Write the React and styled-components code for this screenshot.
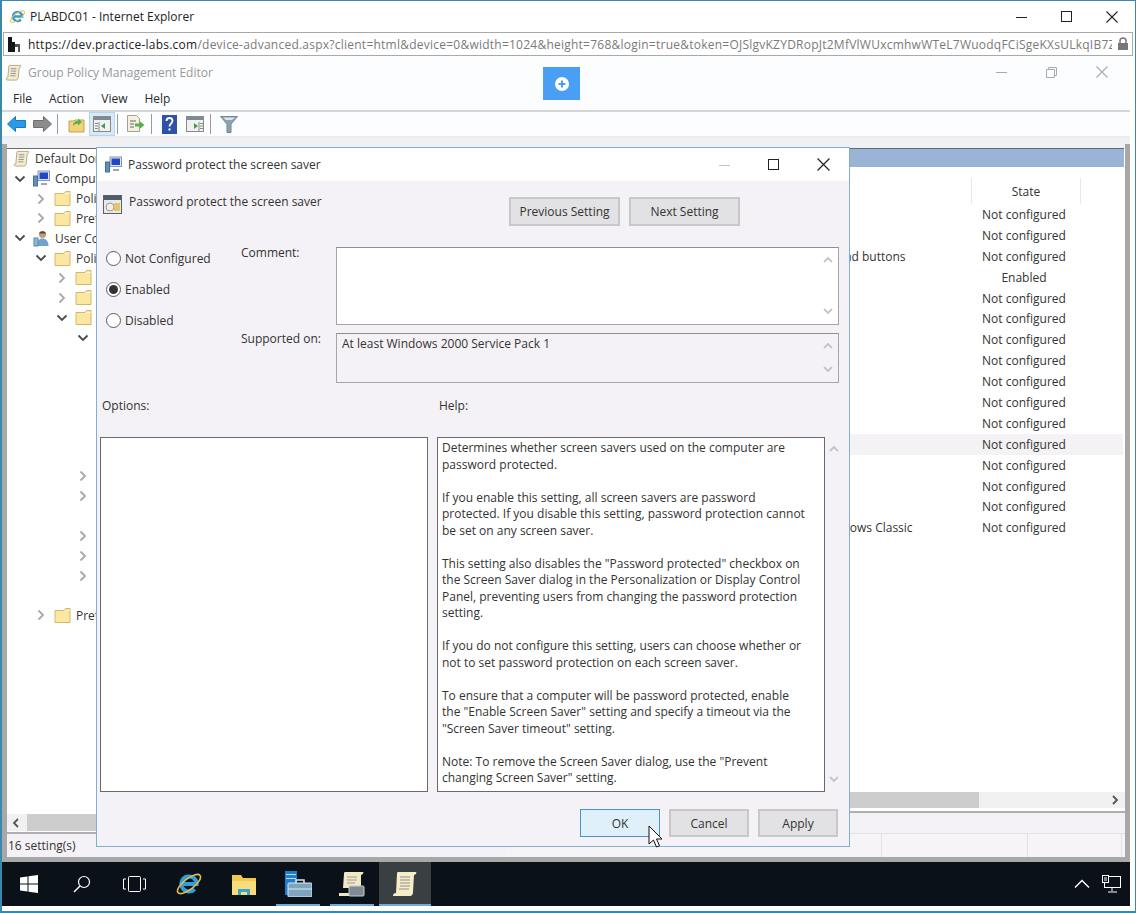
import styled, { createGlobalStyle } from 'styled-components'

const GlobalStyle = createGlobalStyle`
  html, body {
    margin: 0;
    padding: 0;
    background: #ffffff;
  }
  * {
    box-sizing: border-box;
  }
`

const Screen = styled.div`
  position: relative;
  display: flex;
  flex-direction: column;
  width: 1136px;
  height: 913px;
  overflow: hidden;
  background: #ffffff;
  border-style: solid;
  border-color: #3b87ad;
  border-width: 1px 1px 2px 2px;
  font-family: "Open Sans", "Noto Sans", sans-serif;
  font-size: 12px;
  color: #333333;
`

const BrowserTitle = styled.div`
  display: flex;
  align-items: center;
  flex: none;
  height: 31px;
  padding-left: 7px;
  gap: 4px;
  color: #222222;
`

const WindowControls = styled.div`
  display: flex;
  margin-left: auto;
  padding-right: ${p => p.$right}px;
  gap: ${p => p.$gap}px;
  align-items: center;
`

const AddressBar = styled.div`
  display: flex;
  align-items: center;
  flex: none;
  height: 24px;
  margin: 0 2px 0 1px;
  padding: 0 3px;
  border: 1px solid #a9a9a9;
  background: #ffffff;
`

const AddressText = styled.div`
  flex: 1;
  margin-left: 6px;
  overflow: hidden;
  white-space: nowrap;
  color: #7a7a7a;
  letter-spacing: 0.02em;
  b {
    font-weight: 400;
    color: #222222;
  }
`

const Editor = styled.div`
  display: flex;
  flex-direction: column;
  flex: 1;
  min-height: 0;
  margin-right: 5px;
  background: #f1f1f3;
`

const EditorTitle = styled.div`
  display: flex;
  align-items: center;
  flex: none;
  height: 32px;
  padding-left: 3px;
  gap: 6px;
  color: #9a9a9a;
  background: #fcfdff;
`

const MenuBar = styled.div`
  display: flex;
  align-items: center;
  flex: none;
  height: 24px;
  padding: 0 0 2px 11px;
  gap: 17px;
  color: #2a2a2a;
  background: #fcfdff;
  border-bottom: 2px solid #d6d6d6;
`

const Toolbar = styled.div`
  display: flex;
  align-items: center;
  flex: none;
  height: 26px;
  padding-left: 1px;
  background: #fcfdff;
  border-bottom: 2px solid #ececee;
`

const ToolButton = styled.div`
  display: flex;
  align-items: center;
  justify-content: center;
  width: 26px;
  height: 24px;
  background: ${p => (p.$active ? '#d8e8f5' : 'transparent')};
  border: 1px solid ${p => (p.$active ? '#b4d5ec' : 'transparent')};
`

const ToolSeparator = styled.div`
  width: 1px;
  height: 20px;
  margin-left: ${p => p.$left}px;
  margin-right: ${p => p.$right}px;
  background: #9a9a9a;
`

const Workspace = styled.div`
  display: flex;
  flex: 1;
  min-height: 0;
  margin-top: 6px;
  padding-top: 4px;
  background: #f1f1f3;
  border-style: solid;
  border-color: #a8a8a8;
  border-width: 0 5px 5px 5px;
`

const TreeColumn = styled.div`
  display: flex;
  flex-direction: column;
  flex: none;
  width: 500px;
  border-top: 1px solid #6e6e6e;
  background: #ffffff;
`

const TreePane = styled.div`
  flex: 1;
  min-height: 0;
  overflow: hidden;
`

const TreeRow = styled.div`
  display: flex;
  align-items: center;
  height: 19.85px;
  padding-left: ${p => (p.$level === 0 ? 6 : 6 + 21 * (p.$level - 1))}px;
  white-space: nowrap;
`

const ChevronSlot = styled.div`
  display: flex;
  align-items: center;
  justify-content: center;
  flex: none;
  width: 14px;
  margin-right: 6px;
`

const TreeLabel = styled.span`
  margin-left: 5px;
`

const HScroll = styled.div`
  display: flex;
  align-items: center;
  flex: none;
  height: ${p => p.$height}px;
  background: #f1f1f1;
`

const ScrollThumb = styled.div`
  height: 100%;
  margin-left: ${p => p.$left}px;
  width: ${p => p.$width}px;
  background: #cdcdcd;
`

const ScrollArrow = styled.div`
  display: flex;
  justify-content: center;
  flex: none;
  width: 20px;
  margin-left: ${p => (p.$end ? 'auto' : '0')};
`

const TreeStatus = styled.div`
  display: flex;
  align-items: center;
  flex: none;
  height: 25px;
  margin-top: 1px;
  padding-left: 1px;
  background: #f4f2f6;
  border-top: 2px solid #b0b0b0;
`

const DetailColumn = styled.div`
  display: flex;
  flex-direction: column;
  flex: 1;
  min-width: 0;
  background: #ffffff;
`

const BlueBar = styled.div`
  flex: none;
  height: 19px;
  margin-right: 1px;
  background: #99b4d4;
  border-top: 1px solid #5d6a78;
`

const DetailHeader = styled.div`
  display: grid;
  grid-template-columns: 1fr 110px 44px;
  flex: none;
  height: 26px;
  margin-top: 11px;
`

const StateHeading = styled.div`
  display: flex;
  align-items: center;
  justify-content: center;
  grid-column: 2;
  border-left: 1px solid #e8e8e8;
  border-right: 1px solid #e8e8e8;
`

const DetailRows = styled.div`
  flex: 1;
  min-height: 0;
`

const DetailRow = styled.div`
  display: grid;
  grid-template-columns: 1fr 110px 44px;
  align-items: center;
  height: 20.9px;
  margin-right: 2px;
  background: ${p => (p.$selected ? '#f4f2f5' : 'transparent')};
`

const SettingName = styled.div`
  padding-left: 95px;
  white-space: nowrap;
  overflow: hidden;
`

const SettingState = styled.div`
  text-align: center;
  white-space: nowrap;
`

const DetailTabs = styled.div`
  flex: none;
  height: 22px;
  margin-top: 3px;
  background: #f4f2f6;
  border-top: 2px solid #b0b0b0;
`

const DetailStatus = styled.div`
  display: grid;
  grid-template-columns: 375px 146px 94px;
  flex: none;
  height: 24px;
  background: #f6f4f7;
  border-top: 1px solid #e2e2e2;
`

const StatusCell = styled.div`
  border-right: 1px solid #e2e2e2;
`

const Taskbar = styled.div`
  display: flex;
  align-items: stretch;
  flex: none;
  height: 44px;
  background: #0a1119;
`

const TaskItem = styled.div`
  position: relative;
  display: flex;
  align-items: center;
  justify-content: center;
  flex: none;
  width: ${p => p.$width}px;
  background: ${p => (p.$active ? '#3a3f42' : 'transparent')};
  &::after {
    content: '';
    display: ${p => (p.$running || p.$active ? 'block' : 'none')};
    position: absolute;
    bottom: 0;
    left: ${p => (p.$active ? 0 : 5)}px;
    right: ${p => (p.$active ? 0 : 5)}px;
    height: 2px;
    background: #6fa9d6;
  }
`

const Tray = styled.div`
  display: flex;
  align-items: center;
  margin-left: auto;
  padding-right: 9px;
  gap: 12px;
`

const BottomStrip = styled.div`
  flex: none;
  height: 5px;
  background: #ffffff;
`

const FloatingButton = styled.div`
  position: absolute;
  left: 541px;
  top: 66px;
  display: flex;
  align-items: center;
  justify-content: center;
  width: 37px;
  height: 33px;
  background: #4a9ff5;
`

const Dialog = styled.div`
  position: absolute;
  left: 94px;
  top: 146px;
  display: flex;
  flex-direction: column;
  width: 754px;
  height: 700px;
  background: #f4f2f6;
  border: 1px solid #7fb0d0;
`

const DialogTitle = styled.div`
  display: flex;
  align-items: center;
  flex: none;
  height: 33px;
  padding-left: 8px;
  gap: 6px;
  background: #ffffff;
`

const DialogBody = styled.div`
  display: flex;
  flex-direction: column;
  flex: 1;
  padding-left: 3px;
`

const HeadRow = styled.div`
  display: grid;
  grid-template-columns: 406px auto;
  height: 49px;
  margin-left: 3px;
  padding-top: 14px;
`

const PolicyName = styled.div`
  display: flex;
  align-items: flex-start;
  gap: 7px;
  line-height: 14px;
`

const NavButtons = styled.div`
  display: flex;
  gap: 9px;
  margin-top: 2px;
`

const PushButton = styled.div`
  display: flex;
  align-items: center;
  justify-content: center;
  width: ${p => p.$width}px;
  height: ${p => p.$height}px;
  color: #333333;
  background: ${p => (p.$primary ? '#e0f0fb' : '#e2e1e3')};
  border: ${p => (p.$primary ? '1px solid #4a94c8' : '2px solid #c8c8c8')};
`

const SettingsGrid = styled.div`
  display: grid;
  grid-template-columns: 138px 95px 503px;
  grid-template-rows: 78px 50px;
  row-gap: 8px;
  margin-left: 3px;
`

const RadioGroup = styled.div`
  display: flex;
  flex-direction: column;
  grid-row: 1 / 3;
  gap: 11px;
  padding: 1px 0 0 3px;
`

const RadioRow = styled.div`
  display: flex;
  align-items: center;
  height: 20px;
  gap: 4px;
`

const RadioCircle = styled.div`
  display: flex;
  align-items: center;
  justify-content: center;
  width: 15px;
  height: 15px;
  background: #ffffff;
  border: 1px solid #5c5c5c;
  border-radius: 50%;
  &::after {
    content: '';
    display: ${p => (p.$checked ? 'block' : 'none')};
    width: 9px;
    height: 9px;
    border-radius: 50%;
    background: #333333;
  }
`

const FieldLabel = styled.div`
  line-height: 12px;
`

const FieldBox = styled.div`
  display: flex;
  background: ${p => (p.$readOnly ? '#f4f2f6' : '#ffffff')};
  border: 1px solid #a6a6a6;
  border-top-color: #8f8f8f;
`

const FieldText = styled.div`
  flex: 1;
  padding: 2px 5px;
  line-height: 16px;
`

const VScroll = styled.div`
  display: flex;
  flex-direction: column;
  justify-content: space-between;
  align-items: center;
  flex: none;
  width: ${p => p.$width}px;
  padding: 7px 0;
`

const LowerGrid = styled.div`
  display: grid;
  grid-template-columns: 328px 9px 388px 18px;
  grid-template-rows: 14px 355px;
  row-gap: 24px;
  margin-top: 16px;
`

const PaneLabel = styled.div`
  grid-column: ${p => p.$column};
  padding-left: 2px;
  line-height: 14px;
`

const OptionsBox = styled.div`
  grid-column: 1;
  background: #ffffff;
  border: 1px solid #6a6a6a;
`

const HelpBox = styled.div`
  grid-column: 3;
  padding: 2px 0 0 4px;
  line-height: 16.5px;
  white-space: pre;
  overflow: hidden;
  background: #ffffff;
  border: 1px solid #6a6a6a;
`

const DialogFooter = styled.div`
  display: flex;
  justify-content: flex-end;
  gap: 9px;
  margin-top: 17px;
  padding-right: 11px;
`

const Cursor = styled.svg`
  position: absolute;
  left: 646px;
  top: 824px;
`

const Chevron = ({ open }) => (
  <svg width="12" height="12" viewBox="0 0 12 12">
    <path
      d={open ? 'M1.5 3.5L6 8l4.5-4.5' : 'M3.5 1.5L8 6l-4.5 4.5'}
      fill="none"
      stroke={open ? '#4a4a4a' : '#a9a9a9'}
      strokeWidth="1.8"
    />
  </svg>
)

const Arrow = ({ dir, color = '#c4c4c4' }) => {
  const paths = {
    up: 'M2 7l4-4 4 4',
    down: 'M2 4l4 4 4-4',
    left: 'M7 2L3 6l4 4',
    right: 'M4 2l4 4-4 4',
  }
  return (
    <svg width="12" height="12" viewBox="0 0 12 12" style={{ display: 'block' }}>
      <path d={paths[dir]} fill="none" stroke={color} strokeWidth="1.8" />
    </svg>
  )
}

const Minimize = ({ color = '#222', width = 11 }) => (
  <svg width={width} height="12" viewBox={`0 0 ${width} 12`}>
    <path d={`M0 6.5H${width}`} stroke={color} />
  </svg>
)

const Maximize = ({ color = '#222' }) => (
  <svg width="11" height="11" viewBox="0 0 11 11">
    <rect x="0.5" y="0.5" width="10" height="10" fill="none" stroke={color} />
  </svg>
)

const Restore = ({ color = '#aaa' }) => (
  <svg width="11" height="11" viewBox="0 0 11 11">
    <path d="M0.5 2.5h8v8h-8zM2.5 2.5v-2h8v8h-2" fill="none" stroke={color} />
  </svg>
)

const Close = ({ color = '#222', size = 12 }) => (
  <svg width={size} height={size} viewBox="0 0 12 12">
    <path d="M0.5 0.5l11 11M11.5 0.5l-11 11" fill="none" stroke={color} strokeWidth="1.1" />
  </svg>
)

const IEIcon = ({ size = 17 }) => (
  <svg width={size} height={size} viewBox="0 0 24 24">
    <path d="M5.5 12H18.5A6.5 6.5 0 1 0 16.8 16.4" fill="none" stroke="#2f9fdc" strokeWidth="3.4" />
    <ellipse cx="12" cy="12" rx="12" ry="4.6" transform="rotate(-38 12 12)" fill="none" stroke="#e6bb45" strokeWidth="1.4" />
  </svg>
)

const SiteIcon = () => (
  <svg width="15" height="18" viewBox="0 0 15 18">
    <path d="M1 2h4v15H1zM5 7h3v10H5z" fill="#161616" />
    <path d="M8 9h5v8h-2v-5H8z" fill="#555" />
  </svg>
)

const ScrollIcon = ({ size = 17, paper = '#f4ecd2' }) => (
  <svg width={size} height={size} viewBox="0 0 18 18">
    <path d="M5 1.5h11c1 0 1 2-1 2.5l-1 10c0 2-1 3-2.500 3H2.500c-1.500 0-2-2.500 0.500-2.500L4 3c0-1 0-1.500 1-1.500z" fill={paper} stroke="#b5a67c" />
    <path d="M6 5h6M6 7.500h6M6 10h5.500M5.500 12.500h5.500" stroke="#8d8d8d" />
  </svg>
)

const FolderIcon = ({ size = 17 }) => (
  <svg width={size} height={size} viewBox="0 0 17 17">
    <path d="M1 3.500h9l1.500-2H16v14H1z" fill="#fbe6a2" stroke="#d4b86a" />
    <path d="M10.500 3.500H16" stroke="#f6f0dc" />
  </svg>
)

const ComputerIcon = () => (
  <svg width="17" height="17" viewBox="0 0 17 17">
    <rect x="5" y="1" width="11.500" height="9.500" fill="#dfe6ee" stroke="#8a97a6" />
    <rect x="6.500" y="2.500" width="8.500" height="6.500" fill="#1f48c8" />
    <path d="M8 13h6v2H8z" fill="#9aa6b3" />
    <rect x="0.500" y="6" width="4" height="10" fill="#5f8fc0" stroke="#486c92" />
  </svg>
)

const UserIcon = () => (
  <svg width="17" height="17" viewBox="0 0 17 17">
    <circle cx="9.500" cy="4.500" r="3.500" fill="#c49a72" />
    <path d="M6 3.500c1-3 6-3 7 0z" fill="#5a4636" />
    <path d="M4 16c0-5 2-7.500 5.500-7.500S15.500 11 15.500 16z" fill="#6ea3cf" />
    <rect x="1" y="8" width="4" height="8" fill="#8fb8d8" stroke="#5b88ad" />
  </svg>
)

const BackIcon = () => (
  <svg width="19" height="16" viewBox="0 0 19 16">
    <path d="M0.500 8L8.500 0.500v4h10v7h-10v4z" fill="#2a9ae6" stroke="#1c79bd" />
  </svg>
)

const ForwardIcon = () => (
  <svg width="19" height="16" viewBox="0 0 19 16">
    <path d="M18.500 8L10.500 0.500v4h-10v7h10v4z" fill="#8c8c8c" stroke="#6e6e6e" />
  </svg>
)

const FolderUpIcon = () => (
  <svg width="17" height="17" viewBox="0 0 17 17">
    <path d="M1 5h5l1-1h9v12H1z" fill="#f3d27e" stroke="#c6a24f" />
    <path d="M5 10c0-3 2-5 5-5V2.500L14 6l-4 3.500V7.500c-2 0-4 1-5 2.500z" fill="#58b04a" />
  </svg>
)

const PaneIcon = ({ arrow = 'left' }) => (
  <svg width="18" height="16" viewBox="0 0 18 16">
    <rect x="0.500" y="0.500" width="17" height="15" fill="#f1f1f1" stroke="#8a8a8a" />
    <rect x="1" y="1" width="16" height="3" fill="#7d8b96" />
    <path d={arrow === 'left' ? 'M8 10l4-3v6z' : 'M12 10L8 7v6z'} fill="#3f9e46" />
    <path d={arrow === 'left' ? 'M6 6v9M2 7.500h3M2 10h3M2 12.500h3' : 'M13 6v9M14 7.500h3M14 10h3M14 12.500h3'} stroke="#8a8a8a" />
  </svg>
)

const ExportIcon = () => (
  <svg width="20" height="18" viewBox="0 0 20 18">
    <path d="M2.500 0.500h9l3 3v13h-12z" fill="#f6f0e4" stroke="#a89f8d" />
    <path d="M5 6h6M5 9h4M5 12h4" stroke="#666" />
    <path d="M10 8.500h4.500V6l5 4-5 4v-2.500H10z" fill="#58b04a" />
  </svg>
)

const HelpIcon = () => (
  <svg width="15" height="19" viewBox="0 0 15 19">
    <rect width="15" height="19" fill="#2f52a8" />
    <path d="M4.500 6c0-4 6-4 6 0 0 2.500-3 2.500-3 5.500" fill="none" stroke="#ffffff" strokeWidth="1.800" />
    <rect x="6.500" y="13.500" width="2" height="2" fill="#ffffff" />
  </svg>
)

const FilterIcon = () => (
  <svg width="18" height="17" viewBox="0 0 18 17">
    <path d="M0.500 0.500h17L11 8v8.500H7V8z" fill="#8ca3b0" stroke="#71858f" />
    <path d="M3 1.500h12L12 4H6z" fill="#dce5ea" />
  </svg>
)

const PlusDot = () => (
  <svg width="16" height="16" viewBox="0 0 16 16">
    <circle cx="8" cy="8" r="7" fill="#ffffff" />
    <path d="M8 4.500v7M4.500 8h7" stroke="#4a9ff5" strokeWidth="2" />
  </svg>
)

const PolicyIcon = () => (
  <svg width="19" height="19" viewBox="0 0 19 19">
    <rect x="0.500" y="0.500" width="18" height="18" fill="#e9e9e9" stroke="#56626c" />
    <rect x="1" y="1" width="17" height="4" fill="#4d5e6b" />
    <circle cx="7" cy="12" r="4" fill="#f4efe0" stroke="#9c9c9c" />
    <rect x="11" y="8" width="6" height="8" fill="#e6c46a" />
  </svg>
)

const WindowsLogo = () => (
  <svg width="18" height="18" viewBox="0 0 18 18">
    <path d="M0 2.500L7.500 1.400v7H0zM8.500 1.300L18 0v8.400H8.500zM0 9.500h7.500v7L0 15.500zM8.500 9.500H18V18l-9.500-1.300z" fill="#ffffff" />
  </svg>
)

const SearchIcon = () => (
  <svg width="18" height="18" viewBox="0 0 18 18">
    <circle cx="11" cy="7" r="5.500" fill="none" stroke="#ffffff" strokeWidth="1.200" />
    <path d="M7 11l-6 6" stroke="#ffffff" strokeWidth="1.400" />
  </svg>
)

const TaskViewIcon = () => (
  <svg width="23" height="16" viewBox="0 0 23 16">
    <rect x="5.500" y="0.500" width="12" height="15" rx="1" fill="none" stroke="#ffffff" />
    <path d="M3 3H0.500v10H3M20 3h2.500v10H20" fill="none" stroke="#ffffff" />
  </svg>
)

const ExplorerIcon = () => (
  <svg width="24" height="21" viewBox="0 0 24 21">
    <path d="M0 1h9l2 3h13v17H0z" fill="#f2c84e" />
    <path d="M0 7h24v14H0z" fill="#f9dc7c" />
    <path d="M6 15h12v6H6z" fill="#3aa3d0" />
    <path d="M9 18h6v3H9z" fill="#f9dc7c" />
  </svg>
)

const ServerManagerIcon = () => (
  <svg width="27" height="26" viewBox="0 0 27 26">
    <rect x="0" y="0" width="12" height="24" fill="#1d7ed0" />
    <path d="M1 3h10v1H1zM1 7h10v1H1z" fill="#b8dcf6" />
    <rect x="3" y="12" width="24" height="14" rx="1" fill="#7fa4bd" stroke="#dde7ee" />
    <path d="M11 12V9h8v3" fill="none" stroke="#dde7ee" strokeWidth="1.500" />
    <path d="M3 18h24" stroke="#dde7ee" />
  </svg>
)

const GroupPolicyIcon = () => (
  <svg width="26" height="26" viewBox="0 0 26 26">
    <path d="M6 1h18c1 0 0 3-2 3v13H4L5 3c0-1 0-2 1-2z" fill="#f3e8c4" />
    <path d="M8 6h10M8 9h10M8 12h8" stroke="#999" />
    <path d="M0 22h14v3H0z" fill="#f3e8c4" />
    <rect x="10" y="15" width="15" height="10" rx="1" fill="#7f8a92" stroke="#c5ccd0" />
  </svg>
)

const ScrollTaskIcon = () => (
  <svg width="24" height="26" viewBox="0 0 24 26">
    <path d="M5 1h18c1 0 0 3-2 3l-1 17c0 2-1 4-3 4H0c0-2 1-3 3-3L4 3c0-1 0-2 1-2z" fill="#f7eec8" />
    <path d="M7 6h10M7 9h10M7 12h10M7 15h10M6 18h10" stroke="#8d8d8d" />
  </svg>
)

const CaretUp = () => (
  <svg width="16" height="10" viewBox="0 0 16 10">
    <path d="M1 8.500l7-7 7 7" fill="none" stroke="#ffffff" strokeWidth="1.400" />
  </svg>
)

const NetworkIcon = () => (
  <svg width="19" height="18" viewBox="0 0 19 18">
    <rect x="2.500" y="1.500" width="16" height="11" fill="none" stroke="#ffffff" />
    <rect x="0.500" y="0.500" width="6" height="7" fill="#0a1119" stroke="#ffffff" />
    <path d="M2 3h3M2 5h3M10 13v3M6 17h9" stroke="#ffffff" />
  </svg>
)

const treeRows = [
  { level: 0, label: 'Default Domain Policy [PLABDC01]', icon: 'scroll' },
  { level: 1, label: 'Computer Configuration', icon: 'computer', open: true },
  { level: 2, label: 'Policies', icon: 'folder' },
  { level: 2, label: 'Preferences', icon: 'folder' },
  { level: 1, label: 'User Configuration', icon: 'user', open: true },
  { level: 2, label: 'Policies', icon: 'folder', open: true },
  { level: 3, label: 'Software Settings', icon: 'folder' },
  { level: 3, label: 'Windows Settings', icon: 'folder' },
  { level: 3, label: 'Administrative Templates', icon: 'folder', open: true },
  { level: 4, label: 'Control Panel', icon: 'folder', open: true },
  { level: 5, label: 'Add or Remove Programs', icon: 'folder', leaf: true },
  { level: 5, label: 'Display', icon: 'folder', leaf: true },
  { level: 5, label: 'Personalization', icon: 'folder', leaf: true },
  { level: 5, label: 'Printers', icon: 'folder', leaf: true },
  { level: 5, label: 'Programs', icon: 'folder', leaf: true },
  { level: 5, label: 'Regional and Language Options', icon: 'folder', leaf: true },
  { level: 4, label: 'Desktop', icon: 'folder' },
  { level: 4, label: 'Network', icon: 'folder' },
  { level: 4, label: 'Shared Folders', icon: 'folder', leaf: true },
  { level: 4, label: 'Start Menu and Taskbar', icon: 'folder' },
  { level: 4, label: 'System', icon: 'folder' },
  { level: 4, label: 'Windows Components', icon: 'folder' },
  { level: 4, label: 'All Settings', icon: 'folder', leaf: true },
  { level: 2, label: 'Preferences', icon: 'folder' },
]

const treeIcons = {
  scroll: <ScrollIcon />,
  computer: <ComputerIcon />,
  user: <UserIcon />,
  folder: <FolderIcon />,
}

const settings = [
  ['Prevent changing color scheme', 'Not configured'],
  ['Prevent changing theme', 'Not configured'],
  ['Prevent changing visual style for windows and buttons', 'Not configured'],
  ['Enable screen saver', 'Enabled'],
  ['Prohibit selection of visual style font size', 'Not configured'],
  ['Prevent changing color and appearance', 'Not configured'],
  ['Prevent changing desktop background', 'Not configured'],
  ['Prevent changing desktop icons', 'Not configured'],
  ['Prevent changing mouse pointers', 'Not configured'],
  ['Prevent changing screen saver', 'Not configured'],
  ['Prevent changing sounds', 'Not configured'],
  ['Password protect the screen saver', 'Not configured'],
  ['Screen saver timeout', 'Not configured'],
  ['Force specific screen saver', 'Not configured'],
  ['Load a specific theme', 'Not configured'],
  ['Force a specific visual style file or force Windows Classic', 'Not configured'],
]

const helpText = `Determines whether screen savers used on the computer are
password protected.

If you enable this setting, all screen savers are password
protected. If you disable this setting, password protection cannot
be set on any screen saver.

This setting also disables the "Password protected" checkbox on
the Screen Saver dialog in the Personalization or Display Control
Panel, preventing users from changing the password protection
setting.

If you do not configure this setting, users can choose whether or
not to set password protection on each screen saver.

To ensure that a computer will be password protected, enable
the "Enable Screen Saver" setting and specify a timeout via the
"Screen Saver timeout" setting.

Note: To remove the Screen Saver dialog, use the "Prevent
changing Screen Saver" setting.`

const taskItems = [
  { width: 53, icon: <WindowsLogo /> },
  { width: 53, icon: <SearchIcon /> },
  { width: 53, icon: <TaskViewIcon /> },
  { width: 56, icon: <IEIcon size={28} /> },
  { width: 54, icon: <ExplorerIcon /> },
  { width: 54, icon: <ServerManagerIcon />, running: true },
  { width: 54, icon: <GroupPolicyIcon />, running: true },
  { width: 52, icon: <ScrollTaskIcon />, active: true },
]

const App = () => {
  return (
    <Screen>
      <GlobalStyle />
      <BrowserTitle>
        <IEIcon />
        <span>PLABDC01 - Internet Explorer</span>
        <WindowControls $right={17} $gap={34}>
          <Minimize />
          <Maximize />
          <Close />
        </WindowControls>
      </BrowserTitle>
      <AddressBar>
        <SiteIcon />
        <AddressText>
          <b>https://dev.practice-labs.com</b>/device-advanced.aspx?client=html&device=0&width=1024&height=768&login=true&token=OJSlgvKZYDRopJt2MfVlWUxcmhwWTeL7WuodqFCiSgeKXsULkqIB7ZFUxR7ZYOgV
        </AddressText>
        <svg width="12" height="14" viewBox="0 0 12 14" style={{ marginLeft: 5 }}>
          <path d="M3 6V4a3 3 0 0 1 6 0v2" fill="none" stroke="#777" strokeWidth="1.500" />
          <rect x="1" y="6" width="10" height="7" fill="#777" />
        </svg>
      </AddressBar>
      <Editor>
        <EditorTitle>
          <ScrollIcon />
          <span>Group Policy Management Editor</span>
          <WindowControls $right={22} $gap={39}>
            <Minimize color="#aaa" />
            <Restore />
            <Close color="#aaa" />
          </WindowControls>
        </EditorTitle>
        <MenuBar>
          <span>File</span>
          <span>Action</span>
          <span>View</span>
          <span>Help</span>
        </MenuBar>
        <Toolbar>
          <ToolButton><BackIcon /></ToolButton>
          <ToolButton><ForwardIcon /></ToolButton>
          <ToolSeparator $left={2} $right={5} />
          <ToolButton><FolderUpIcon /></ToolButton>
          <ToolButton $active><PaneIcon /></ToolButton>
          <ToolSeparator $left={2} $right={4} />
          <ToolButton><ExportIcon /></ToolButton>
          <ToolSeparator $left={3} $right={4} />
          <ToolButton><HelpIcon /></ToolButton>
          <ToolButton><PaneIcon arrow="right" /></ToolButton>
          <ToolSeparator $left={2} $right={5} />
          <ToolButton><FilterIcon /></ToolButton>
        </Toolbar>
        <Workspace>
          <TreeColumn>
            <TreePane>
              {treeRows.map((row, i) => (
                <TreeRow key={i} $level={row.level}>
                  {row.level > 0 && (
                    <ChevronSlot>{!row.leaf && <Chevron open={row.open} />}</ChevronSlot>
                  )}
                  {treeIcons[row.icon]}
                  <TreeLabel>{row.label}</TreeLabel>
                </TreeRow>
              ))}
            </TreePane>
            <HScroll $height={17}>
              <ScrollArrow><Arrow dir="left" color="#555" /></ScrollArrow>
              <ScrollThumb $left={0} $width={380} />
            </HScroll>
            <TreeStatus>16 setting(s)</TreeStatus>
          </TreeColumn>
          <DetailColumn>
            <BlueBar />
            <DetailHeader>
              <StateHeading>State</StateHeading>
            </DetailHeader>
            <DetailRows>
              {settings.map(([name, state], i) => (
                <DetailRow key={name} $selected={i === 11}>
                  <SettingName>{name}</SettingName>
                  <SettingState>{state}</SettingState>
                </DetailRow>
              ))}
            </DetailRows>
            <HScroll $height={16}>
              <ScrollThumb $left={0} $width={472} />
              <ScrollArrow $end><Arrow dir="right" color="#555" /></ScrollArrow>
            </HScroll>
            <DetailTabs />
            <DetailStatus>
              <StatusCell />
              <StatusCell />
              <StatusCell />
            </DetailStatus>
          </DetailColumn>
        </Workspace>
        <Taskbar>
          {taskItems.map((item, i) => (
            <TaskItem key={i} $width={item.width} $running={item.running} $active={item.active}>
              {item.icon}
            </TaskItem>
          ))}
          <Tray>
            <CaretUp />
            <NetworkIcon />
          </Tray>
        </Taskbar>
      </Editor>
      <BottomStrip />

      <FloatingButton>
        <PlusDot />
      </FloatingButton>

      <Dialog>
        <DialogTitle>
          <ComputerIcon />
          <span>Password protect the screen saver</span>
          <WindowControls $right={19} $gap={38}>
            <Minimize color="#c4c4c4" />
            <Maximize />
            <Close size={13} />
          </WindowControls>
        </DialogTitle>
        <DialogBody>
          <HeadRow>
            <PolicyName>
              <PolicyIcon />
              <span>Password protect the screen saver</span>
            </PolicyName>
            <NavButtons>
              <PushButton $width={111} $height={29}>Previous Setting</PushButton>
              <PushButton $width={111} $height={29}>Next Setting</PushButton>
            </NavButtons>
          </HeadRow>
          <SettingsGrid style={{ marginTop: 17 }}>
            <RadioGroup>
              <RadioRow><RadioCircle />Not Configured</RadioRow>
              <RadioRow><RadioCircle $checked />Enabled</RadioRow>
              <RadioRow><RadioCircle />Disabled</RadioRow>
            </RadioGroup>
            <FieldLabel>Comment:</FieldLabel>
            <FieldBox>
              <FieldText />
              <VScroll $width={20}>
                <Arrow dir="up" />
                <Arrow dir="down" />
              </VScroll>
            </FieldBox>
            <FieldLabel>Supported on:</FieldLabel>
            <FieldBox $readOnly>
              <FieldText>At least Windows 2000 Service Pack 1</FieldText>
              <VScroll $width={20}>
                <Arrow dir="up" />
                <Arrow dir="down" />
              </VScroll>
            </FieldBox>
          </SettingsGrid>
          <LowerGrid>
            <PaneLabel $column={1}>Options:</PaneLabel>
            <PaneLabel $column={3}>Help:</PaneLabel>
            <OptionsBox />
            <HelpBox>{helpText}</HelpBox>
            <VScroll $width={18}>
              <Arrow dir="up" />
              <Arrow dir="down" />
            </VScroll>
          </LowerGrid>
          <DialogFooter>
            <PushButton $width={80} $height={28} $primary>OK</PushButton>
            <PushButton $width={80} $height={28}>Cancel</PushButton>
            <PushButton $width={80} $height={28}>Apply</PushButton>
          </DialogFooter>
        </DialogBody>
      </Dialog>

      <Cursor width="15" height="24" viewBox="0 0 15 24">
        <path d="M1 1v18l4.500-4 3 7 3-1.200-3-6.800H14z" fill="#ffffff" stroke="#111111" strokeWidth="1" />
      </Cursor>
    </Screen>
  )
}

export default App
